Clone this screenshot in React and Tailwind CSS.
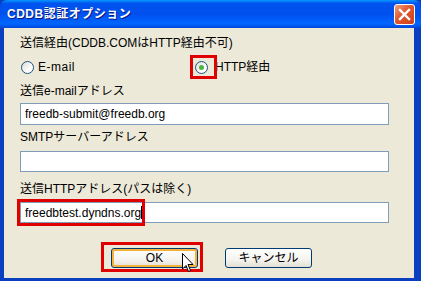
import React from "react";

function Radio({ checked }) {
  return (
    <span className="relative inline-block w-[13px] h-[13px] rounded-full border border-[#1C5180] bg-[linear-gradient(135deg,#DCDCD7_0%,#FFFFFF_70%)]">
      {checked && (
        <span className="absolute left-[3px] top-[3px] w-[5px] h-[5px] rounded-full bg-[#4DB43C]" />
      )}
    </span>
  );
}

export default function App() {
  return (
    <div className="relative w-[421px] h-[281px] bg-[#0A3FBF] font-['Liberation_Sans','Noto_Sans_CJK_JP',sans-serif] text-[12px] text-black overflow-hidden">
      {/* Title bar */}
      <div className="h-[28px] flex items-center justify-between pl-[7px] pr-[6px] rounded-t-[7px] bg-[linear-gradient(180deg,#0997FF_0%,#0053EE_12%,#0050EE_50%,#0066FF_85%,#0047D8_100%)]">
        <span className="text-white font-bold text-[12px] tracking-[0.5px] [text-shadow:1px_1px_0_#0A1883]">CDDB認証オプション</span>
        <span className="w-[21px] h-[21px] rounded-[3px] border border-white bg-[linear-gradient(135deg,#F0A080_0%,#E0572F_45%,#C83F1A_100%)] flex items-center justify-center">
          <svg width="13" height="13" viewBox="0 0 13 13">
            <path d="M2 2 L11 11 M11 2 L2 11" stroke="white" strokeWidth="2.4" strokeLinecap="square" />
          </svg>
        </span>
      </div>
      {/* Body */}
      <div className="ml-[4px] mr-[7px] h-[250px] bg-[#ECE9D8] pl-[16px] pr-[25px] pt-[7px] flex flex-col">
        <div className="h-[16px] leading-[16px]">送信経由(CDDB.COMはHTTP経由不可)</div>
        <div className="mt-[9px] h-[14px] flex items-center">
          <div className="flex items-center w-[175px] pl-[1px]">
            <Radio />
            <span className="ml-[4px] tracking-[0.5px]">E-mail</span>
          </div>
          <div className="flex items-center">
            <Radio checked />
            <span className="ml-[7px]">HTTP経由</span>
          </div>
        </div>
        <div className="mt-[9px] h-[16px] leading-[16px]">送信e-mailアドレス</div>
        <div className="mt-[4px] h-[22px] border border-[#7F9DB9] bg-white px-[4px] flex items-center">freedb-submit@freedb.org</div>
        <div className="mt-[4px] h-[16px] leading-[16px]">SMTPサーバーアドレス</div>
        <div className="mt-[6px] h-[21px] border border-[#7F9DB9] bg-white" />
        <div className="mt-[9px] h-[16px] leading-[16px]">送信HTTPアドレス(パスは除く)</div>
        <div className="mt-[5px] h-[21px] border border-[#7F9DB9] bg-white px-[4px] flex items-center">
          freedbtest.dyndns.org<span className="inline-block w-[1px] h-[13px] bg-black" />
        </div>
        <div className="mt-[25px] flex">
          <div className="ml-[91px] w-[87px] h-[20px] rounded-[3px] border border-[#003C74] bg-[linear-gradient(180deg,#FFFFFF_0%,#F4F3EE_60%,#E2DFD2_100%)] shadow-[inset_0_0_0_2px_#F6B13C] flex items-center justify-center">OK</div>
          <div className="ml-[27px] w-[87px] h-[20px] rounded-[3px] border border-[#003C74] bg-[linear-gradient(180deg,#FFFFFF_0%,#F4F3EE_60%,#E2DFD2_100%)] flex items-center justify-center">キャンセル</div>
        </div>
      </div>
      {/* Annotation boxes */}
      <div className="absolute left-[190px] top-[55px] w-[27px] h-[24px] border-[3px] border-[#E00000]" />
      <div className="absolute left-[17px] top-[199px] w-[128px] h-[27px] border-[3px] border-[#E00000]" />
      <div className="absolute left-[101px] top-[242px] w-[102px] h-[30px] border-[3px] border-[#E00000]" />
      {/* Cursor */}
      <svg className="absolute left-[182px] top-[253px]" width="13" height="21" viewBox="0 0 13 21">
        <path d="M0.5 0.5 L0.5 16 L4 12.5 L6.5 18.5 L8.5 17.5 L6 11.5 L11 11.5 Z" fill="white" stroke="black" strokeWidth="1" />
      </svg>
    </div>
  );
}
